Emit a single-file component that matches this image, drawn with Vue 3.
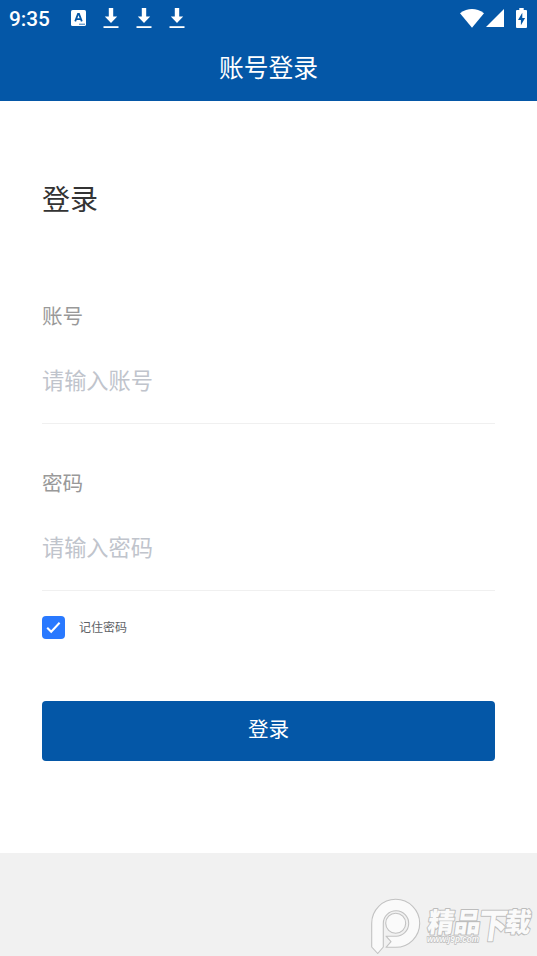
<script setup>
import { ref } from 'vue'

const fields = [
  { id: 'account', label: '账号', placeholder: '请输入账号', type: 'text' },
  { id: 'password', label: '密码', placeholder: '请输入密码', type: 'password' },
]
const form = ref({ account: '', password: '' })
const remember = ref(true)
</script>

<template>
  <div class="screen">
    <header class="top">
      <div class="status">
        <span class="time">9:35</span>
        <svg class="app-icon" viewBox="0 0 15 16">
          <rect width="15" height="16" rx="1.6" fill="#fff" />
          <path d="M4.2 11.4 7 4h1l2.8 7.4M5.3 9.2h4.4" fill="none" stroke="#0457a7" stroke-width="1.8" />
          <path d="M8 14.2h6" stroke="#0457a7" stroke-width=".8" />
        </svg>
        <svg v-for="n in 3" :key="n" class="download" viewBox="0 0 16 21">
          <path d="M5.8 0h4.4v8.5h4L8 15 1.8 8.5h4z" fill="#fff" />
          <path d="M.5 18.2h15v1.8H.5z" fill="#fff" />
        </svg>
        <span class="spacer"></span>
        <svg class="wifi" viewBox="0 0 24 19">
          <path d="M0 4.2Q12-4 24 4.2L12 18.8z" fill="#fff" />
        </svg>
        <svg class="signal" viewBox="0 0 18 18"><path d="M0 18 18 0v18z" fill="#fff" /></svg>
        <svg class="battery" viewBox="0 0 11 20">
          <path d="M3.3 0h4.4v2H10q1 0 1 1v16q0 1-1 1H1q-1 0-1-1V3q0-1 1-1h2.3z" fill="#fff" />
          <path d="M6.3 4.8 2 12h2.9v5.2L9.1 10H6.3z" fill="#0457a7" />
        </svg>
      </div>
      <h1 class="title">账号登录</h1>
    </header>

    <main class="content">
      <h2 class="heading">登录</h2>
      <form @submit.prevent>
        <div v-for="f in fields" :key="f.id" class="field">
          <label class="label" :for="f.id">{{ f.label }}</label>
          <input :id="f.id" v-model="form[f.id]" class="input" :type="f.type" :placeholder="f.placeholder" autocomplete="off" />
        </div>
        <label class="remember">
          <input v-model="remember" class="native" type="checkbox" />
          <span class="box" :class="{ on: remember }">
            <svg v-if="remember" viewBox="0 0 23 23">
              <path d="m5.2 11.7 4 4 8.4-9" fill="none" stroke="#fff" stroke-width="2" />
            </svg>
          </span>
          <span class="remember-text">记住密码</span>
        </label>
        <button class="submit" type="submit">登录</button>
      </form>
    </main>

    <footer class="footer">
      <svg class="mark" viewBox="0 0 177 66">
        <g fill="#fafafa" stroke="#c2c2c2" stroke-width="1.1" stroke-linejoin="round">
          <path d="M11.7 33.3A24 24 0 1 1 35.7 57.3H26L31 51.6 26 46.2H35.7A12.7 12.7 0 1 0 23.3 33.3V57L17.7 63.5 11.7 57z" />
          <circle cx="35.7" cy="33.3" r="10" />
        </g>
        <g class="brand" transform="translate(66.5 43) skewX(-8)">
          <text x="0" y="-1" font-size="27" textLength="53" lengthAdjust="spacingAndGlyphs">精品</text>
          <text x="51" y="5" font-size="35" textLength="29" lengthAdjust="spacingAndGlyphs">下</text>
          <text x="77" y="-1" font-size="27" textLength="26" lengthAdjust="spacingAndGlyphs">载</text>
        </g>
        <text class="site" x="67" y="52" textLength="52" lengthAdjust="spacingAndGlyphs">www.j9p.com</text>
      </svg>
    </footer>
  </div>
</template>

<style>
body {
  margin: 0;
}
</style>

<style scoped>
.screen {
  height: 956px;
  display: flex;
  flex-direction: column;
  overflow: hidden;
  background: #f1f1f1;
  font-family: "Noto Sans CJK SC", sans-serif;
}
.top {
  height: 101.3px;
  flex: none;
  background: #0457a7;
  color: #fff;
}
.status {
  height: 36px;
  box-sizing: border-box;
  padding: 0 10px 0 9px;
  display: flex;
  align-items: center;
}
.time {
  width: 61.5px;
  font: 500 20.8px/36px Roboto, sans-serif;
  padding-top: 2px;
}
.app-icon {
  width: 15px;
  height: 16px;
  margin-right: 17.5px;
}
.download {
  width: 16px;
  height: 21px;
  margin-right: 17px;
}
.spacer {
  flex: 1;
}
.wifi {
  width: 24px;
  height: 19px;
  margin-right: 2px;
}
.signal {
  width: 18px;
  height: 18px;
  margin-right: 12px;
}
.battery {
  width: 11px;
  height: 20px;
}
.title {
  margin: 0;
  text-align: center;
  font-size: 24.8px;
  font-weight: 400;
  line-height: 61px;
}
.content {
  height: 752px;
  flex: none;
  box-sizing: border-box;
  padding: 77px 42px 0;
  background: #fff;
}
.heading {
  margin: 0 0 76px;
  font-size: 28px;
  font-weight: 400;
  line-height: 40px;
  color: #333;
}
.field {
  height: 167px;
  box-sizing: border-box;
  padding-top: 5px;
  display: flex;
  flex-direction: column;
}
.label {
  font-size: 20.6px;
  line-height: 32px;
  color: #999;
}
.input {
  height: 93px;
  box-sizing: border-box;
  margin: 0;
  padding: 4px 0 0;
  border: 0;
  border-bottom: 1px solid #f0f0f0;
  outline: 0;
  background: none;
  color: #333;
  font-family: inherit;
  font-size: 22.2px;
}
.input::placeholder {
  color: #c0c4cc;
  opacity: 1;
}
.remember {
  height: 23px;
  margin-top: -12px;
  display: flex;
  align-items: center;
}
.native {
  appearance: none;
  width: 0;
  height: 0;
  margin: 0;
}
.box {
  width: 23px;
  height: 23px;
  box-sizing: border-box;
  border: 1px solid #c8c9cc;
  border-radius: 4px;
}
.box.on {
  border: 0;
  background: #2979ff;
}
.box svg {
  display: block;
}
.remember-text {
  margin-left: 14px;
  padding-bottom: 2px;
  font-size: 12px;
  line-height: 21px;
  color: #606266;
}
.submit {
  display: block;
  width: 453px;
  height: 60px;
  margin: 62px 0 0;
  padding: 0 0 6px;
  border: 0;
  border-radius: 4px;
  background: #0457a7;
  color: #fff;
  font-family: inherit;
  font-size: 20.6px;
}
.footer {
  flex: 1;
  display: flex;
  justify-content: flex-end;
  align-items: flex-end;
}
.mark {
  width: 177px;
  height: 66px;
}
.brand {
  font-weight: 900;
  fill: #fafafa;
  stroke: #bdbdbd;
  stroke-width: 2px;
  stroke-linejoin: round;
  paint-order: stroke;
}
.site {
  font: italic 700 9px "Liberation Sans", sans-serif;
  fill: #fafafa;
  stroke: #bdbdbd;
  stroke-width: 1.4px;
  paint-order: stroke;
}
</style>
